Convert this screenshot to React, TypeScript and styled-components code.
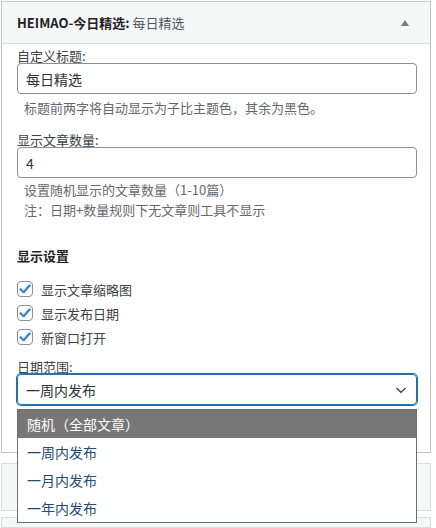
import React from 'react'
import styled, { createGlobalStyle } from 'styled-components'

const GlobalStyle = createGlobalStyle`
  body {
    margin: 0;
    background: #fff;
    font-family: "Noto Sans CJK SC", "Noto Sans", sans-serif;
    color: #3c434a;
    overflow: hidden;
  }
`

const Page = styled.div`
  width: 430px;
  padding: 1px 0 0 1px;
  display: flex;
  flex-direction: column;
`

const Widget = styled.div`
  border: 1px solid #c3c4c7;
  background: #fff;
  height: 452px;
  box-sizing: border-box;
`

const CollapsedWidget = styled.div<{ $h: number; $mt: number }>`
  border: 1px solid #dcdcde;
  background: #f6f7f7;
  height: ${({ $h }) => $h}px;
  box-sizing: border-box;
  margin-top: ${({ $mt }) => $mt}px;
`

const Header = styled.div`
  height: 42px;
  box-sizing: border-box;
  background: #f6f7f7;
  border-bottom: 1px solid #dcdcde;
  display: flex;
  align-items: center;
  justify-content: space-between;
  padding: 0 15px 0 15px;
`

const Title = styled.h3`
  margin: 0;
  font-size: 13px;
  font-weight: 600;
  color: #1d2327;
  span {
    font-weight: 400;
    color: #50575e;
  }
`

const Toggle = styled.span`
  width: 0;
  height: 0;
  margin-right: 6px;
  border-left: 4px solid transparent;
  border-right: 4px solid transparent;
  border-bottom: 6px solid #787c82;
`

const Content = styled.div`
  padding: 5px 15px 0 15px;
  display: flex;
  flex-direction: column;
  font-size: 13px;
`

const Label = styled.label<{ $mt?: number }>`
  display: block;
  line-height: 14px;
  margin-top: ${({ $mt }) => $mt ?? 0}px;
  color: #3c434a;
`

const TextInput = styled.input`
  box-sizing: border-box;
  width: 400px;
  height: 31px;
  margin: 0;
  padding: 0 8px;
  border: 1px solid #8c8f94;
  border-radius: 4px;
  font-family: "Noto Sans CJK SC", "Noto Sans", sans-serif;
  font-size: 14px;
  color: #2c3338;
  background: #fff;
  outline: none;
`

const Desc = styled.p<{ $mt?: number }>`
  margin: ${({ $mt }) => $mt ?? 0}px 0 0 7px;
  line-height: 20px;
  font-size: 13px;
  color: #646970;
`

const Heading = styled.h4`
  margin: 26px 0 0;
  font-size: 13px;
  line-height: 20px;
  font-weight: 700;
  color: #1d2327;
`

const CheckList = styled.div`
  margin-top: 11px;
  display: flex;
  flex-direction: column;
`

const CheckRow = styled.div`
  height: 24px;
  display: flex;
  align-items: center;
  gap: 8px;
  color: #3c434a;
`

const Box = styled.span`
  width: 16px;
  height: 16px;
  box-sizing: border-box;
  border: 1px solid #8c8f94;
  border-radius: 4px;
  display: flex;
  align-items: center;
  justify-content: center;
  background: #fff;
`

const SelectWrap = styled.div`
  position: relative;
  width: 400px;
`

const SelectBox = styled.div`
  box-sizing: border-box;
  height: 31px;
  border: 1px solid #2271b1;
  box-shadow: 0 0 0 1px #2271b1;
  border-radius: 4px;
  display: flex;
  align-items: center;
  justify-content: space-between;
  padding: 0 8px 0 8px;
  font-size: 14px;
  color: #2c3338;
`

const OptionList = styled.ul`
  position: absolute;
  top: 35px;
  left: 0;
  width: 400px;
  box-sizing: border-box;
  margin: 0;
  padding: 0;
  list-style: none;
  border: 1px solid #6d6d6d;
  background: #fff;
  z-index: 5;
`

const Option = styled.li<{ $active?: boolean }>`
  height: 28px;
  display: flex;
  align-items: center;
  padding: 0 9px;
  font-size: 14px;
  background: ${({ $active }) => ($active ? '#777' : '#fff')};
  color: ${({ $active }) => ($active ? '#fff' : '#1f4b75')};
`

const Check = () => (
  <svg width="14" height="14" viewBox="0 0 14 14">
    <path d="M2.5 7.2 L5.6 10.2 L11.6 3.4" fill="none" stroke="#3582c4" strokeWidth="2.2" strokeLinecap="round" strokeLinejoin="round" />
  </svg>
)

const Chevron = () => (
  <svg width="14" height="14" viewBox="0 0 14 14">
    <path d="M2.5 5 L7 9.3 L11.5 5" fill="none" stroke="#50575e" strokeWidth="1.6" />
  </svg>
)

const checks = ['显示文章缩略图', '显示发布日期', '新窗口打开']
const options = ['随机（全部文章）', '一周内发布', '一月内发布', '一年内发布']

export default function App() {
  return (
    <>
      <GlobalStyle />
      <Page>
        <Widget>
          <Header>
            <Title>
              HEIMAO-今日精选: <span>每日精选</span>
            </Title>
            <Toggle />
          </Header>
          <Content>
            <Label>自定义标题:</Label>
            <TextInput defaultValue="每日精选" />
            <Desc $mt={4}>标题前两字将自动显示为子比主题色，其余为黑色。</Desc>
            <Label $mt={15}>显示文章数量:</Label>
            <TextInput defaultValue="4" />
            <Desc $mt={2}>设置随机显示的文章数量（1-10篇）</Desc>
            <Desc>注：日期+数量规则下无文章则工具不显示</Desc>
            <Heading>显示设置</Heading>
            <CheckList>
              {checks.map((c) => (
                <CheckRow key={c}>
                  <Box>
                    <Check />
                  </Box>
                  {c}
                </CheckRow>
              ))}
            </CheckList>
            <Label $mt={11}>日期范围:</Label>
            <SelectWrap>
              <SelectBox>
                一周内发布
                <Chevron />
              </SelectBox>
              <OptionList>
                {options.map((o, i) => (
                  <Option key={o} $active={i === 0}>
                    {o}
                  </Option>
                ))}
              </OptionList>
            </SelectWrap>
          </Content>
        </Widget>
        <CollapsedWidget $h={48} $mt={10} />
        <CollapsedWidget $h={11} $mt={6} />
      </Page>
    </>
  )
}
